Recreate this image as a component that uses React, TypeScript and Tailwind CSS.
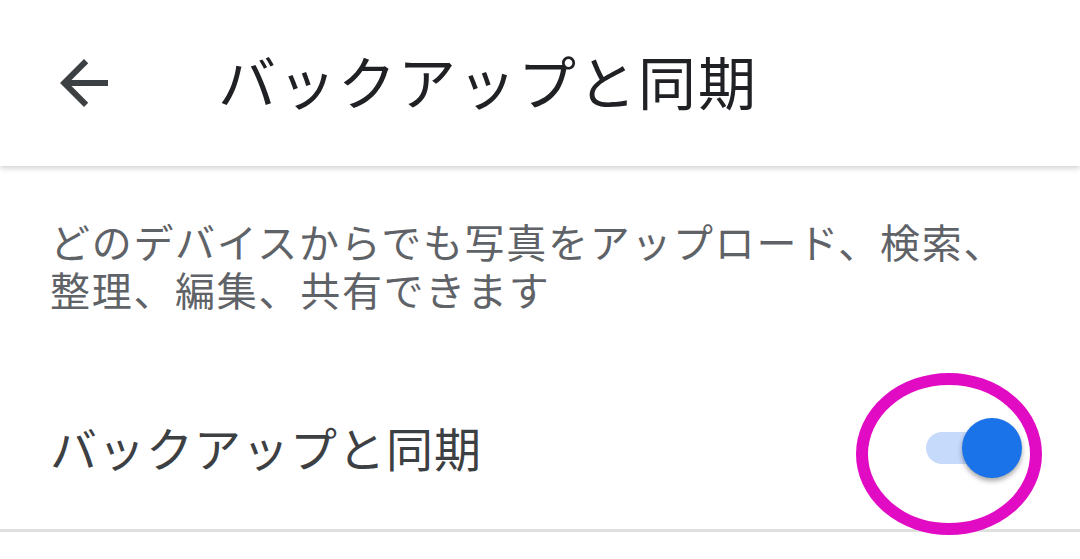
import { useState } from "react";

const FONT = { fontFamily: '"Noto Sans CJK JP", "Noto Sans", sans-serif' };

function BackArrow() {
  return (
    <svg viewBox="0 0 24 24" className="w-[72px] h-[72px] fill-[#3c4043]">
      <path d="M20 11H7.83l5.59-5.59L12 4l-8 8 8 8 1.41-1.41L7.83 13H20v-2z" />
    </svg>
  );
}

function Toggle({ on, onChange }: { on: boolean; onChange: () => void }) {
  return (
    <button onClick={onChange} className="relative w-[96px] h-[60px] flex items-center">
      <span
        className={`absolute left-0 w-[80px] h-[32px] rounded-full ${on ? "bg-[#c6dafc]" : "bg-gray-300"}`}
      />
      <span
        className={`absolute w-[60px] h-[60px] rounded-full shadow-[0_3px_5px_rgba(0,0,0,0.35)] ${
          on ? "left-[36px] bg-[#1a73e8]" : "left-[-14px] bg-gray-50"
        }`}
      />
    </button>
  );
}

export default function App() {
  const [enabled, setEnabled] = useState(true);

  return (
    <div className="w-[1080px] h-[559px] bg-white overflow-hidden relative" style={FONT}>
      {/* Header */}
      <div className="h-[166px] flex items-center bg-white shadow-[0_2px_6px_rgba(0,0,0,0.2)] relative z-10">
        <div className="ml-[48px]">
          <BackArrow />
        </div>
        <h1 className="ml-[98px] mb-[7px] text-[58px] leading-none tracking-[2px] text-[#202124]">
          バックアップと同期
        </h1>
      </div>

      {/* Description */}
      <div className="mt-[51px] px-[50px] text-[40px] leading-[48px] tracking-[1.7px] text-[#5f6368]">
        <p>どのデバイスからでも写真をアップロード、検索、</p>
        <p>整理、編集、共有できます</p>
      </div>

      {/* Setting row */}
      <div className="mt-[54px] h-[162px] flex items-center justify-between pl-[50px] pr-[58px]">
        <span className="mb-[3px] text-[47px] leading-none tracking-[1px] text-[#3c4043]">
          バックアップと同期
        </span>
        <Toggle on={enabled} onChange={() => setEnabled(!enabled)} />
      </div>
      <div className="h-[3px] bg-[#e0e0e0]" />

      {/* Annotation ring */}
      <svg className="absolute left-0 top-0 pointer-events-none" width="1080" height="559">
        <ellipse cx="949" cy="454" rx="87" ry="75" fill="none" stroke="#e10bc4" strokeWidth="12" />
      </svg>
    </div>
  );
}
